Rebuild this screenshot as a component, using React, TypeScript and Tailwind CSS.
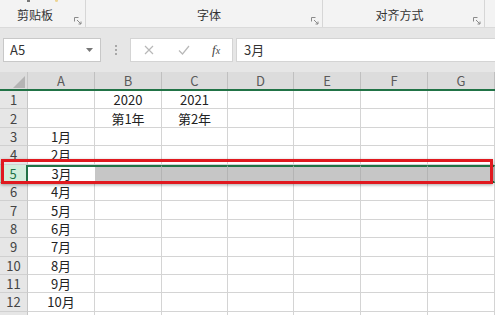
import React from 'react';

const COLS = ['A', 'B', 'C', 'D', 'E', 'F', 'G'];
const COL_W = [67, 67, 66, 66, 67, 67, 67];

const cells: Record<string, string> = {
  B1: '2020',
  C1: '2021',
  B2: '第1年',
  C2: '第2年',
  A3: '1月',
  A4: '2月',
  A5: '3月',
  A6: '4月',
  A7: '5月',
  A8: '6月',
  A9: '7月',
  A10: '8月',
  A11: '9月',
  A12: '10月',
};

const font = { fontFamily: '"Noto Sans CJK SC", "Noto Sans", sans-serif' };

function Launcher() {
  return (
    <svg width="8" height="8" viewBox="0 0 8 8" className="text-[#8a8a8a]">
      <path d="M0.5 0.5h4M0.5 0.5v4" stroke="currentColor" strokeWidth="1" fill="none" />
      <path d="M3 3l4 4M7 4.5V7H4.5" stroke="currentColor" strokeWidth="1" fill="none" />
    </svg>
  );
}

function Ribbon() {
  return (
    <div className="flex h-[28px] bg-[#f3f3f3] border-b border-[#dadada] text-[12px] text-[#333]">
      <div className="relative w-[86px] border-r border-[#d6d6d6] flex items-end justify-start pl-[17px] pb-[3px]">
        <span>剪贴板</span>
        <div className="absolute right-[3px] bottom-[2px]"><Launcher /></div>
        <div className="absolute left-[27px] top-0 w-[3px] h-[2px] bg-[#777]" />
        <div className="absolute left-[55px] top-0 w-[3px] h-[2px] rounded-b-full bg-[#ecd493]" />
      </div>
      <div className="relative w-[237px] border-r border-[#d6d6d6] flex items-end justify-center pb-[3px]">
        <span className="ml-[10px]">字体</span>
        <div className="absolute right-[3px] bottom-[2px]"><Launcher /></div>
      </div>
      <div className="relative w-[162px] border-r border-[#d6d6d6] flex items-end justify-center pb-[3px]">
        <span className="mr-[8px]">对齐方式</span>
        <div className="absolute right-[3px] bottom-[2px]"><Launcher /></div>
      </div>
      <div className="flex-1" />
    </div>
  );
}

function FormulaBar() {
  return (
    <div className="h-[44px] bg-[#e6e6e6] flex items-start pt-[10px] pl-[3px]">
      <div className="w-[98px] h-[24px] bg-white border border-[#c8c8c8] flex items-center justify-between pl-[6px] pr-[7px]">
        <span className="text-[13px] text-[#333]">A5</span>
        <svg width="7" height="4" viewBox="0 0 7 4"><path d="M0 0h7L3.5 4z" fill="#777" /></svg>
      </div>
      <div className="w-[29px] h-[24px] flex flex-col items-center justify-center gap-[2px]">
        <div className="w-[2px] h-[2px] bg-[#a8a8a8]" />
        <div className="w-[2px] h-[2px] bg-[#a8a8a8]" />
        <div className="w-[2px] h-[2px] bg-[#a8a8a8]" />
      </div>
      <div className="w-[103px] h-[24px] bg-white border border-[#d4d4d4] flex items-center">
        <svg width="10" height="10" viewBox="0 0 10 10" className="ml-[13px]">
          <path d="M1 1l8 8M9 1L1 9" stroke="#b8b8b8" strokeWidth="1.2" />
        </svg>
        <svg width="12" height="10" viewBox="0 0 12 10" className="ml-[24px]">
          <path d="M1 5.5l3.5 3.5L11 1" stroke="#b8b8b8" strokeWidth="1.2" fill="none" />
        </svg>
        <span className="ml-[22px] text-[13px] italic text-[#444]" style={{ fontFamily: '"Liberation Serif", serif' }}>
          f<span className="text-[10px]">x</span>
        </span>
      </div>
      <div className="ml-[3px] flex-1 h-[24px] bg-white border border-[#d4d4d4] border-r-0 flex items-center pl-[7px]">
        <span className="text-[13px] text-[#333]">3月</span>
      </div>
    </div>
  );
}

function Sheet() {
  const rows = Array.from({ length: 13 }, (_, i) => i + 1);
  return (
    <div className="relative">
      {/* column headers */}
      <div className="flex h-[19px] bg-[#dcdcdc] border-b-2 border-[#217346]">
        <div className="relative w-[28px] border-r border-[#c6c6c6]">
          <svg width="12" height="12" viewBox="0 0 12 12" className="absolute right-[2px] bottom-[1px]">
            <path d="M12 0v12H0z" fill="#b4b4b4" />
          </svg>
        </div>
        {COLS.map((c, i) => (
          <div
            key={c}
            style={{ width: COL_W[i] }}
            className="border-r border-[#c0c0c0] flex items-center justify-center text-[13px] text-[#5a5a5a] leading-none"
          >
            {c}
          </div>
        ))}
      </div>
      {rows.map(r => {
        const sel = r === 5;
        return (
          <div key={r} className="flex h-[18.4px]">
            <div
              className={`w-[28px] flex items-center justify-center text-[13px] leading-none border-b ${
                sel
                  ? 'bg-[#d2eedc] text-[#217346] border-[#9fd5b7] border-r-2 border-r-[#217346]'
                  : 'bg-[#e6e6e6] text-[#444] border-[#d0d0d0] border-r border-r-[#c6c6c6]'
              }`}
            >
              {r < 13 ? r : ''}
            </div>
            {COLS.map((c, i) => {
              const key = `${c}${r}`;
              const active = sel && c === 'A';
              return (
                <div
                  key={key}
                  style={{ width: COL_W[i] }}
                  className={`flex items-center justify-center text-[13px] text-[#222] leading-none ${
                    sel
                      ? active
                        ? 'bg-white border-y-2 border-[#217346]'
                        : 'bg-[#c6c6c6] border-y-2 border-[#217346] border-r border-r-[#b4b4b4]'
                      : 'bg-white border-r border-b border-[#d4d4d4]'
                  }`}
                >
                  {cells[key] ?? ''}
                </div>
              );
            })}
          </div>
        );
      })}
      {/* annotation box around row 5 */}
      <div className="absolute left-[1px] top-[87px] w-[492px] h-[25px] border-[3px] border-[#e0191f] shadow-[0_1px_3px_rgba(0,0,0,0.35)] pointer-events-none" />
    </div>
  );
}

export default function App() {
  return (
    <div className="w-[495px] h-[315px] overflow-hidden bg-white" style={font}>
      <Ribbon />
      <FormulaBar />
      <Sheet />
    </div>
  );
}
